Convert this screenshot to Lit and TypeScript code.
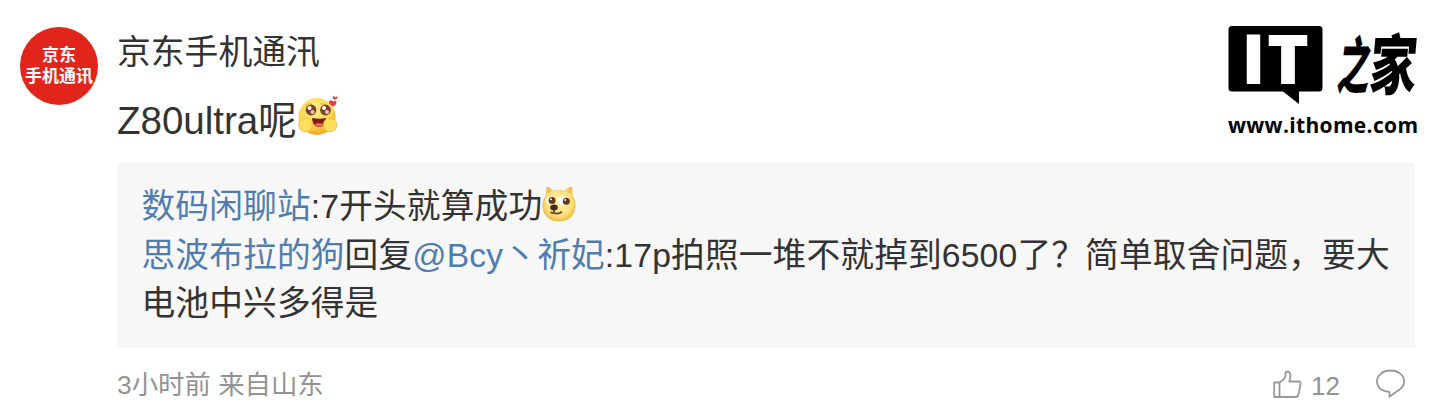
import { LitElement, html, css } from 'lit';
import { customElement, property } from 'lit/decorators.js';

@customElement('hug-emoji')
export class HugEmoji extends LitElement {
  static styles = css`
    :host {
      display: block;
      width: 42px;
      height: 42px;
    }

    svg {
      display: block;
    }
  `;

  render() {
    return html`
      <svg width="42" height="42" viewBox="0 0 42 42">
        <defs>
          <radialGradient id="face" cx="45%" cy="30%" r="70%">
            <stop offset="0" stop-color="#fff08a" />
            <stop offset="0.65" stop-color="#fdd84a" />
            <stop offset="1" stop-color="#eda52a" />
          </radialGradient>
        </defs>
        <circle cx="20" cy="21.5" r="18.5" fill="url(#face)" />
        <path d="M8 11q3-3 7-2M23 9q4-1 6 2" fill="none" stroke="#e7a83a" stroke-width="1" />
        <circle cx="14" cy="15" r="5.4" fill="#7a4030" />
        <circle cx="28.500" cy="15" r="5.4" fill="#7a4030" />
        <circle cx="12.5" cy="13" r="2" fill="#fff" />
        <circle cx="27" cy="13" r="2" fill="#fff" />
        <circle cx="15.500" cy="17" r="2" fill="#ecc8b8" />
        <circle cx="30" cy="17" r="2" fill="#ecc8b8" />
        <path d="M15 23q7 1.500 14 0q-.5 9-7 9t-7-9z" fill="#7b1d16" />
        <path d="M17 29.500q5-3 10 0q-5 4.500-10 0z" fill="#f0683c" />
        <circle cx="8.500" cy="30" r="6.800" fill="#ffe05d" stroke="#efb63a" stroke-width="0.8" />
        <circle cx="33" cy="30" r="6.800" fill="#ffe05d" stroke="#efb63a" stroke-width="0.8" />
        <path d="M36 11.500c-5-2.500-5-6-2-6.200q1.500 0 2 1.500q1-1.500 2.500-.8c2 1.200.5 4.200-2.500 5.500z" fill="#e7394c" />
        <path d="M37.500 4.800c-2.800-2-2-4 0-3.300l.8.900q1-1.300 2-.5c1 1-.6 2.300-2.800 2.900z" fill="#e7394c" />
      </svg>
    `;
  }
}

@customElement('doge-emoji')
export class DogeEmoji extends LitElement {
  static styles = css`
    :host {
      display: inline-block;
      width: 34px;
      height: 36px;
      vertical-align: -4px;
    }

    svg {
      display: block;
    }
  `;

  render() {
    return html`
      <svg width="34" height="36" viewBox="0 0 34 36">
        <defs>
          <radialGradient id="fur" cx="50%" cy="45%" r="60%">
            <stop offset="0" stop-color="#fff3ae" />
            <stop offset="0.65" stop-color="#fbe17c" />
            <stop offset="1" stop-color="#e9b63c" />
          </radialGradient>
        </defs>
        <path
          d="M4 10L4.800 2Q5 .5 6.500 1.500L12 5.200Q17 4 22 5L28 1.200Q29.500.5 29.800 2L30.500 10Q33.500 14 33.200 20Q32 35 17 35.200Q2 35 .8 20Q.8 14 4 10z"
          fill="url(#fur)"
          stroke="#e5b84a"
          stroke-width="0.6"
        />
        <path d="M5.800 7l.7-4 3.300 2.800zM28.700 7l-.7-4-3.300 2.800z" fill="#eeb95f" />
        <ellipse cx="8.500" cy="14.500" rx="4.600" ry="4.200" fill="#fff" />
        <ellipse cx="21.500" cy="14.500" rx="5.800" ry="4.400" fill="#fff" />
        <circle cx="10" cy="14.500" r="3.500" fill="#60371b" />
        <circle cx="24.300" cy="15.300" r="3.500" fill="#60371b" />
        <circle cx="9" cy="13.300" r="1" fill="#fff" />
        <circle cx="23.200" cy="14" r="1" fill="#fff" />
        <ellipse cx="12" cy="21.500" rx="3.800" ry="3" fill="#4b2819" />
        <path d="M12 24v3q4.500 1.500 8-1.200M12 26.500q-2 .8-3.500-.3" fill="none" stroke="#68412a" stroke-width="1.800" />
      </svg>
    `;
  }
}

@customElement('site-logo')
export class SiteLogo extends LitElement {
  static styles = css`
    :host {
      display: block;
      width: 192px;
      height: 114px;
    }

    svg {
      display: block;
      overflow: visible;
    }

    .mark {
      font-family: 'Open Sans', 'Liberation Sans', sans-serif;
      font-size: 34px;
      font-weight: 800;
      fill: #fff;
    }

    .brush {
      font-family: 'Noto Sans CJK SC', sans-serif;
      font-size: 48px;
      font-weight: 900;
    }

    .url {
      font-family: 'Open Sans', 'Noto Sans', sans-serif;
      font-size: 21px;
      font-weight: 700;
    }
  `;

  render() {
    return html`
      <svg width="192" height="114" viewBox="0 0 192 114">
        <path d="M4 0H91Q94.500 0 94.500 3.500V62Q94.500 65.500 91 65.500H71V78L55 65.500H4Q.5 65.500.5 62V3.500Q.5 0 4 0z" />
        <g transform="translate(0 57.500) scale(1 2.050)">
          <text class="mark" x="13.500" y="0" textLength="24" lengthAdjust="spacingAndGlyphs">I</text>
          <text class="mark" x="39" y="0" textLength="42" lengthAdjust="spacingAndGlyphs">T</text>
        </g>
        <g transform="translate(108 62) skewX(-8) scale(1 1.280)">
          <text class="brush" x="0" y="0" textLength="32" lengthAdjust="spacingAndGlyphs">之</text>
        </g>
        <g transform="translate(140 62.500) skewX(-5) scale(1 1.360)">
          <text class="brush" x="0" y="0" textLength="47" lengthAdjust="spacingAndGlyphs">家</text>
        </g>
        <text class="url" x="0" y="107" textLength="190">www.ithome.com</text>
      </svg>
    `;
  }
}

@customElement('comment-actions')
export class CommentActions extends LitElement {
  @property({ type: Number }) likes = 0;

  static styles = css`
    :host {
      display: flex;
      align-items: center;
      color: #939393;
    }

    svg {
      display: block;
      fill: none;
      stroke: #999;
      stroke-width: 1.8;
      stroke-linejoin: round;
    }

    .count {
      margin: 3px 36px 0 9px;
      font-size: 26px;
      line-height: 30px;
    }
  `;

  render() {
    return html`
      <svg width="29" height="30" viewBox="0 0 29 30">
        <path d="M1.200 13.500H6.500V28H1.200zM6.500 13.500Q12.500 10 12.500 6V4.500Q12.500 2.500 14.500 2.500T17.300 5.500Q17.800 9 16.200 12.500H25.500Q28 12.500 27.600 15L25.500 25.500Q25 28 22.500 28H6.500" />
      </svg>
      <span class="count">${this.likes}</span>
      <svg width="30" height="30" viewBox="0 0 30 30">
        <path d="M14.500 1.500C22 1.500 28.200 6.200 28.200 12.300C28.200 19 22 22 18.500 24L13.500 27.800V22.900C6 22.700 1 18.500 1 12.300C1 6.200 7 1.500 14.500 1.500z" />
      </svg>
    `;
  }
}

@customElement('app-root')
export class AppRoot extends LitElement {
  static styles = css`
    :host {
      display: block;
      width: 1440px;
      height: 418px;
      background: #fff;
      color: #333;
      font-family: 'Liberation Sans', 'Noto Sans CJK SC', sans-serif;
    }

    .comment {
      display: grid;
      grid-template-columns: 78px 1298px;
      column-gap: 19px;
      padding: 26px 0 0 20px;
    }

    .avatar {
      display: flex;
      flex-direction: column;
      align-items: center;
      box-sizing: border-box;
      width: 78px;
      height: 78px;
      margin-top: 1px;
      padding-top: 18px;
      border-radius: 50%;
      background: #e1251b;
      color: #fff;
      font-size: 17px;
      font-weight: 700;
      line-height: 21px;
      white-space: nowrap;
    }

    .top {
      display: flex;
      justify-content: space-between;
      height: 137px;
    }

    .logo {
      margin-right: -5px;
    }

    .author {
      padding-top: 1px;
      font-size: 33.8px;
      line-height: 50px;
    }

    .message {
      display: flex;
      align-items: center;
      margin-top: 14px;
      font-size: 38.5px;
      line-height: 60px;
    }

    .message hug-emoji {
      margin-top: -11px;
    }

    .quote {
      box-sizing: border-box;
      height: 185px;
      padding: 19px 0 0 24.5px;
      background: #f7f7f7;
      font-size: 33.7px;
      line-height: 48.5px;
      letter-spacing: 0.16px;
      white-space: nowrap;
    }

    .line {
      height: 48.5px;
    }

    .user {
      color: #507daf;
    }

    .footer {
      display: flex;
      align-items: center;
      justify-content: space-between;
      height: 40px;
      margin-top: 16px;
      padding-right: 9px;
      color: #939393;
      font-size: 26.4px;
    }

    .meta {
      padding-bottom: 3px;
    }
  `;

  render() {
    return html`
      <div class="comment">
        <div class="avatar">
          <span>京东</span>
          <span>手机通讯</span>
        </div>
        <div class="body">
          <div class="top">
            <div class="intro">
              <div class="author">京东手机通汛</div>
              <div class="message"><span>Z80ultra呢</span><hug-emoji></hug-emoji></div>
            </div>
            <site-logo class="logo"></site-logo>
          </div>
          <div class="quote">
            <div class="line"><span class="user">数码闲聊站</span>:7开头就算成功<doge-emoji></doge-emoji></div>
            <div class="line"><span class="user">思波布拉的狗</span>回复<span class="user">@Bcy丶祈妃</span>:17p拍照一堆不就掉到6500了？简单取舍问题，要大</div>
            <div class="line">电池中兴多得是</div>
          </div>
          <div class="footer">
            <span class="meta">3小时前 来自山东</span>
            <comment-actions .likes=${12}></comment-actions>
          </div>
        </div>
      </div>
    `;
  }
}
